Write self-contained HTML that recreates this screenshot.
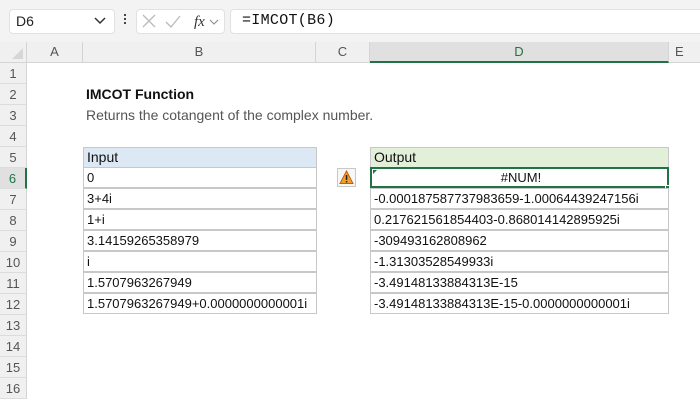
<!DOCTYPE html>
<html><head><style>
*{margin:0;padding:0;box-sizing:border-box}
body{width:700px;height:400px;overflow:hidden;background:#fff;font-family:"Liberation Sans",Arial,sans-serif;position:relative}
.a{position:absolute}
.tb{left:0;top:0;width:700px;height:42px;background:#f3f3f3}
.box{background:#fff;border:1px solid #e1e1e1;border-radius:4px}
.ch{top:42px;height:21px;background:#f0f0f0;border-bottom:1px solid #d4d4d4;border-right:1px solid #d4d4d4;color:#555;font-size:13px;text-align:center;line-height:20px}
.rh{left:0;width:27px;height:21px;background:#f0f0f0;border-bottom:1px solid #dcdcdc;border-right:1px solid #d4d4d4;color:#555;font-size:13px;text-align:center;line-height:21px}
.c{height:21px;border:1px solid #c8c8c8;font-size:13px;line-height:19px;padding-left:3px;color:#111;white-space:nowrap;background:#fff}
</style></head><body>
<div class="a tb"></div>
<div class="a box" style="left:9px;top:9px;width:106px;height:25px"></div>
<div class="a" style="left:16px;top:13px;font-size:14px;color:#222">D6</div>
<svg class="a" style="left:94px;top:17px" width="12" height="8"><path d="M1 1 L6 6 L11 1" stroke="#333" stroke-width="1.5" fill="none"/></svg>
<div class="a" style="left:124px;top:14px;width:2px;height:2px;background:#444;box-shadow:0 4px #444,0 8px #444"></div>
<div class="a box" style="left:136px;top:9px;width:89px;height:25px"></div>
<svg class="a" style="left:142px;top:14px" width="80" height="16"><path d="M1 1 L13 13 M13 1 L1 13" stroke="#bbb" stroke-width="1.3"/><path d="M24 8 L29 13 L38 2" stroke="#bbb" stroke-width="1.3" fill="none"/><text x="52" y="12" font-family="Liberation Serif" font-style="italic" font-size="15" fill="#333">fx</text><path d="M68 6 L72 10 L76 6" stroke="#888" fill="none"/></svg>
<div class="a box" style="left:230px;top:9px;width:475px;height:25px"></div>
<div class="a" style="left:242px;top:12px;font-size:15px;font-family:'Liberation Mono',monospace;color:#111;letter-spacing:0.3px">=IMCOT(B6)</div>

<div class="a ch" style="left:0;width:27px"></div>
<svg class="a" style="left:12px;top:48px" width="12" height="12"><path d="M11 0 L11 11 L0 11Z" fill="#d6d6d6"/></svg>
<div class="a ch" style="left:27px;width:56px">A</div>
<div class="a ch" style="left:83px;width:233px">B</div>
<div class="a ch" style="left:316px;width:54px">C</div>
<div class="a ch" style="left:370px;width:299px;background:#e0e0e0;color:#217346;border-bottom:2px solid #217346">D</div>
<div class="a ch" style="left:669px;width:40px;text-align:left;padding-left:6px">E</div>

<div class="a rh" style="top:63px">1</div>
<div class="a rh" style="top:84px">2</div>
<div class="a rh" style="top:105px">3</div>
<div class="a rh" style="top:126px">4</div>
<div class="a rh" style="top:147px">5</div>
<div class="a rh" style="top:168px;background:#e0e0e0;color:#217346;border-right:2px solid #217346">6</div>
<div class="a rh" style="top:189px">7</div>
<div class="a rh" style="top:210px">8</div>
<div class="a rh" style="top:231px">9</div>
<div class="a rh" style="top:252px">10</div>
<div class="a rh" style="top:273px">11</div>
<div class="a rh" style="top:294px">12</div>
<div class="a rh" style="top:315px">13</div>
<div class="a rh" style="top:336px">14</div>
<div class="a rh" style="top:357px">15</div>
<div class="a rh" style="top:378px">16</div>

<div class="a" style="left:86px;top:86px;font-size:14px;font-weight:bold;color:#111">IMCOT Function</div>
<div class="a" style="left:86px;top:107px;font-size:14px;color:#555">Returns the cotangent of the complex number.</div>

<div class="a c" style="left:83px;top:147px;width:234px;background:#dde8f5;font-size:14px">Input</div>
<div class="a c" style="left:83px;top:167px;width:234px">0</div>
<div class="a c" style="left:83px;top:188px;width:234px">3+4i</div>
<div class="a c" style="left:83px;top:209px;width:234px">1+i</div>
<div class="a c" style="left:83px;top:230px;width:234px">3.14159265358979</div>
<div class="a c" style="left:83px;top:251px;width:234px">i</div>
<div class="a c" style="left:83px;top:272px;width:234px">1.5707963267949</div>
<div class="a c" style="left:83px;top:293px;width:234px">1.5707963267949+0.0000000000001i</div>

<div class="a c" style="left:370px;top:147px;width:299px;background:#e2efd9;font-size:14px">Output</div>
<div class="a c" style="left:370px;top:167px;width:299px;border:2px solid #217346;text-align:center;line-height:17px">#NUM!</div>
<div class="a" style="left:665px;top:185px;width:5px;height:5px;background:#217346;border:1px solid #fff"></div>
<svg class="a" style="left:373px;top:170px" width="5" height="5"><path d="M0 0 L4 0 L0 4Z" fill="#217346"/></svg>
<div class="a c" style="left:370px;top:188px;width:299px">-0.000187587737983659-1.00064439247156i</div>
<div class="a c" style="left:370px;top:209px;width:299px">0.217621561854403-0.868014142895925i</div>
<div class="a c" style="left:370px;top:230px;width:299px">-309493162808962</div>
<div class="a c" style="left:370px;top:251px;width:299px">-1.31303528549933i</div>
<div class="a c" style="left:370px;top:272px;width:299px">-3.49148133884313E-15</div>
<div class="a c" style="left:370px;top:293px;width:299px">-3.49148133884313E-15-0.0000000000001i</div>

<div class="a" style="left:337px;top:168px;width:19px;height:19px;border:1px solid #c8c8c8;background:#f7f7f7"></div>
<svg class="a" style="left:339px;top:170px" width="15" height="15"><path d="M7.5 1 L14 13.5 L1 13.5Z" fill="#f0a030" stroke="#c06010" stroke-width="1"/><rect x="6.8" y="5" width="1.5" height="5" fill="#222"/><rect x="6.8" y="11" width="1.5" height="1.5" fill="#222"/></svg>
</body></html>
